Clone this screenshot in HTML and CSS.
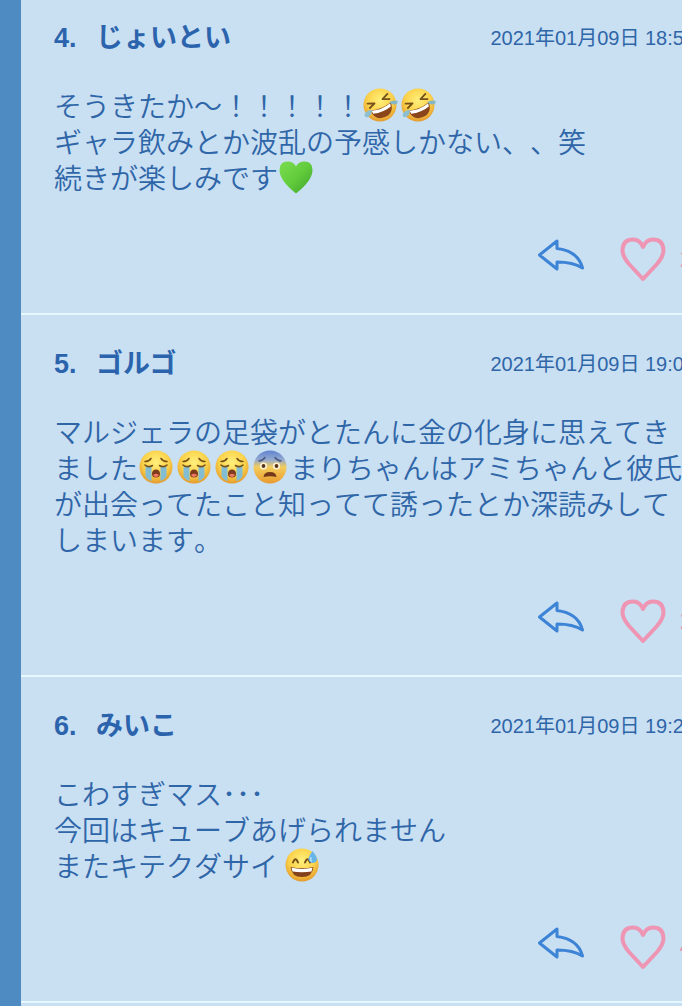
FILE: index.html
```html
<!DOCTYPE html>
<html lang="ja">
<head>
    <meta charset="utf-8">
    <meta name="viewport" content="width=device-width, initial-scale=1">
    <title>コメント</title>
    <link rel="stylesheet" href="styles.css">
</head>
<body>

    <!-- Shared icons -->
    <svg class="sprite" aria-hidden="true">
        <defs>
            <radialGradient id="face" cx="50%" cy="36%" r="64%">
                <stop offset="0" stop-color="#fff07c"/>
                <stop offset="0.6" stop-color="#fbd24a"/>
                <stop offset="1" stop-color="#e39a2c"/>
            </radialGradient>
            <linearGradient id="fear" x1="0" y1="0" x2="0" y2="1">
                <stop offset="0" stop-color="#5f83cf"/>
                <stop offset="0.28" stop-color="#93a9cf"/>
                <stop offset="0.5" stop-color="#f3cd5c"/>
                <stop offset="1" stop-color="#e99a2e"/>
            </linearGradient>
            <linearGradient id="green" x1="0" y1="0" x2="1" y2="1">
                <stop offset="0" stop-color="#7bdc50"/>
                <stop offset="0.5" stop-color="#62cc3c"/>
                <stop offset="1" stop-color="#3da42a"/>
            </linearGradient>
        </defs>
        <symbol id="rofl" viewBox="0 0 38 36">
            <circle cx="18" cy="18" r="16.5" fill="url(#face)"/>
            <g transform="rotate(-22 18 18)">
                <path d="M7 19.5Q18 23 29 19.5Q28.5 31 18 31Q7.5 31 7 19.5Z" fill="#8b451b"/>
                <path d="M8 20.2Q18 23.5 28 20.2L27.5 23.5Q18 26.5 8.5 23.5Z" fill="#fff"/>
                <path d="M7 12L13.5 14.5L7.5 17M29 10.5L22.5 13.5L29 16" fill="none" stroke="#76501b" stroke-width="1.8" stroke-linecap="round" stroke-linejoin="round"/>
            </g>
            <path d="M10 23Q4 23 2.5 28Q3 31 6 30Q10 28 10 23Z" fill="#8dbfd0"/>
            <path d="M27 15Q32 12.5 35.5 14Q36 17 33 17.5Q30 18 27 15Z" fill="#86b7c6"/>
        </symbol>
        <symbol id="sob" viewBox="0 0 38 36">
            <circle cx="18" cy="18" r="16.5" fill="url(#face)"/>
            <path d="M7.5 17.5H13.5V32Q9 30.5 7.5 27ZM22.5 17.5H28.5V27Q27 30.5 22.5 32Z" fill="#83bdd4"/>
            <path d="M7 16Q10.5 19 14.5 16.5M21.5 16.5Q25.5 19 29 16M7 12.5Q11 12.5 13 9.5M23 9.5Q25 12.5 29 12.5" fill="none" stroke="#76501b" stroke-width="1.6" stroke-linecap="round"/>
            <path d="M14 25Q14 20.5 18 20.5T22 25Q22 28.5 18 28.5T14 25Z" fill="#7e3c1c"/>
            <path d="M15 26Q18 23.5 21 26Q20 28 18 28T15 26Z" fill="#ef7762"/>
        </symbol>
        <symbol id="fearful" viewBox="0 0 38 36">
            <circle cx="18" cy="18" r="16.5" fill="url(#fear)"/>
            <circle cx="11.5" cy="17" r="3.6" fill="#fdf3d4"/>
            <circle cx="24.5" cy="17" r="3.6" fill="#fdf3d4"/>
            <circle cx="11.5" cy="17" r="1.9" fill="#5b3517"/>
            <circle cx="24.5" cy="17" r="1.9" fill="#5b3517"/>
            <path d="M7 12Q11 11.5 13 8.5M23 8.5Q25 11.5 29 12" fill="none" stroke="#4b5983" stroke-width="1.5" stroke-linecap="round"/>
            <path d="M11.5 28Q12 23 18 23T24.5 28Q18 26.5 11.5 28Z" fill="#74391a"/>
        </symbol>
        <symbol id="sweat" viewBox="0 0 38 36">
            <circle cx="18" cy="18" r="16.5" fill="url(#face)"/>
            <path d="M6.5 20Q18 22.5 29.5 20Q28.5 30 18 30Q7.5 30 6.5 20Z" fill="#83421c"/>
            <path d="M7.5 20.8Q18 23 28.5 20.8L27.5 24.5Q18 26 8.5 24.5Z" fill="#fff"/>
            <path d="M9 15.5Q11.5 9 14 15.5M21 15.5Q23.5 9 26 15.5" fill="none" stroke="#76501b" stroke-width="2" stroke-linecap="round"/>
            <path d="M28.5 4Q24 10.5 24.5 12.5Q25.5 16 29 16Q33 15.5 33 12Q32.5 9 28.5 4Z" fill="#65b5e9"/>
            <path d="M27 10.5Q26 13 27.5 14" fill="none" stroke="#c5e7fb" stroke-width="1.2" stroke-linecap="round"/>
        </symbol>
        <symbol id="green-heart" viewBox="0 0 38 36">
            <path d="M18 34.5Q1.5 21.5 1.5 11Q1.5 2.5 9.5 2.5Q15.5 2.5 18 7.5Q20.5 2.5 26.5 2.5Q34.5 2.5 34.5 11Q34.5 21.5 18 34.5Z" fill="url(#green)"/>
        </symbol>
        <symbol id="reply" viewBox="0 0 48 40">
            <path d="M2.500 16L20 2V9.500Q41 12 45.500 29Q36 23 20 23V30Z" fill="none" stroke="#3d83d6" stroke-width="3" stroke-linejoin="round"/>
        </symbol>
        <symbol id="like" viewBox="0 0 46 46">
            <path d="M23 43L9 28Q2.500 20.500 2.500 14Q3 3.500 13 3.500Q20 3.500 23 11Q26 3.500 33 3.500Q43 3.500 43.500 14Q43.500 20.500 37 28Z" fill="none" stroke="#ee95b4" stroke-width="4" stroke-linejoin="round"/>
        </symbol>
    </svg>

    <main class="comments">
        <article class="comment">
            <header class="comment-head">
                <h2 class="name"><span class="number">4.</span>じょいとい</h2>
                <time class="date" datetime="2021-01-09T18:56">2021年01月09日 18:56</time>
            </header>
            <p class="text">そうきたか〜！！！！！<svg class="emoji" role="img" aria-label="🤣"><use href="#rofl"/></svg><svg class="emoji" role="img" aria-label="🤣"><use href="#rofl"/></svg><br>ギャラ飲みとか波乱の予感しかない、、笑<br>続きが楽しみです<svg class="emoji" role="img" aria-label="💚"><use href="#green-heart"/></svg></p>
            <div class="actions">
                <button class="action" type="button" aria-label="返信"><svg class="reply-icon"><use href="#reply"/></svg></button>
                <button class="action" type="button" aria-label="いいね"><svg class="like-icon"><use href="#like"/></svg><span class="count">2</span></button>
            </div>
        </article>

        <article class="comment">
            <header class="comment-head">
                <h2 class="name"><span class="number">5.</span>ゴルゴ</h2>
                <time class="date" datetime="2021-01-09T19:02">2021年01月09日 19:02</time>
            </header>
            <p class="text">マルジェラの足袋がとたんに金の化身に思えてきました<svg class="emoji" role="img" aria-label="😭"><use href="#sob"/></svg><svg class="emoji" role="img" aria-label="😭"><use href="#sob"/></svg><svg class="emoji" role="img" aria-label="😭"><use href="#sob"/></svg><svg class="emoji" role="img" aria-label="😨"><use href="#fearful"/></svg>まりちゃんはアミちゃんと彼氏が出会ってたこと知ってて誘ったとか深読みしてしまいます。</p>
            <div class="actions">
                <button class="action" type="button" aria-label="返信"><svg class="reply-icon"><use href="#reply"/></svg></button>
                <button class="action" type="button" aria-label="いいね"><svg class="like-icon"><use href="#like"/></svg><span class="count">2</span></button>
            </div>
        </article>

        <article class="comment">
            <header class="comment-head">
                <h2 class="name"><span class="number">6.</span>みいこ</h2>
                <time class="date" datetime="2021-01-09T19:21">2021年01月09日 19:21</time>
            </header>
            <p class="text">こわすぎマス･･･<br>今回はキューブあげられません<br>またキテクダサイ <svg class="emoji" role="img" aria-label="😅"><use href="#sweat"/></svg></p>
            <div class="actions">
                <button class="action" type="button" aria-label="返信"><svg class="reply-icon"><use href="#reply"/></svg></button>
                <button class="action" type="button" aria-label="いいね"><svg class="like-icon"><use href="#like"/></svg><span class="count">4</span></button>
            </div>
        </article>
    </main>

</body>
</html>
```
FILE: styles.css
```css
* { box-sizing: border-box; }
html { overflow-x: hidden; background: #c9dff2; }
body {
    margin: 0;
    min-height: 100vh;
    border-left: 21px solid #4f8bc3;
    background: #c9dff2;
    color: #2f66a8;
    font-family: "Liberation Sans", "Noto Sans CJK JP", sans-serif;
    overflow-x: hidden;
}
.sprite { display: block; width: 0; height: 0; }

/* the list runs a little past the right edge of the window */
.comments { width: calc(100% + 13px); }
.comment {
    padding: 31px 0 31px 33px;
    border-bottom: 2px solid #e6f8ff;
}
.comment:first-child { padding-top: 20px; }
.comment-head {
    display: flex;
    justify-content: space-between;
    align-items: center;
    height: 36px;
}
.name { margin: 0; font-size: 27px; line-height: 36px; color: #2b64ad; }
.number { display: inline-block; width: 42px; }
.date { font-size: 20px; line-height: 36px; white-space: nowrap; }
.text {
    margin: 31px 0 41px;
    font-family: "Noto Sans CJK JP", sans-serif;
    font-size: 28px;
    font-weight: 350;
    font-kerning: none;
    line-height: 36px;
    text-spacing-trim: space-all;
}
.emoji { width: 38px; height: 36px; vertical-align: top; }

.actions {
    display: flex;
    justify-content: flex-end;
    align-items: center;
    gap: 35px;
}
.action {
    display: flex;
    align-items: center;
    gap: 12px;
    padding: 0;
    border: 0;
    background: none;
    color: #ee95b4;
    font: 24px/36px "Liberation Sans", sans-serif;
    cursor: pointer;
}
.reply-icon { width: 48px; height: 40px; }
.like-icon { width: 46px; height: 46px; }
.count { width: 17px; }
```
